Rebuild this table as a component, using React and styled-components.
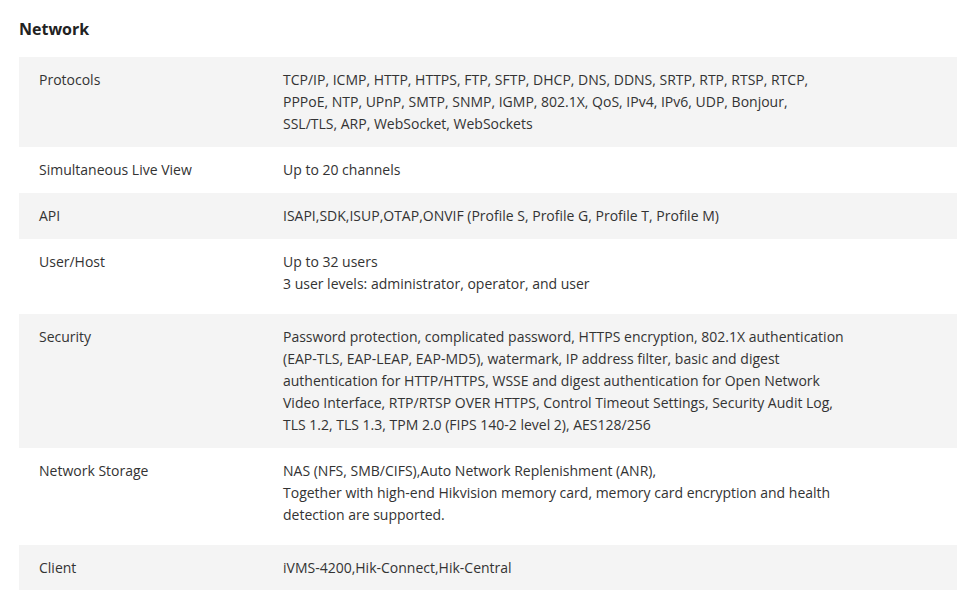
import React from 'react';
import styled, { createGlobalStyle } from 'styled-components';

const GlobalStyle = createGlobalStyle`
    body {
        margin: 0;
        background: #fff;
        font-family: "Open Sans", "Liberation Sans", sans-serif;
        color: #333;
    }
`

const specs = [
    {
        label: 'Protocols',
        lines: ['TCP/IP, ICMP, HTTP, HTTPS, FTP, SFTP, DHCP, DNS, DDNS, SRTP, RTP, RTSP, RTCP, PPPoE, NTP, UPnP, SMTP, SNMP, IGMP, 802.1X, QoS, IPv4, IPv6, UDP, Bonjour, SSL/TLS, ARP, WebSocket, WebSockets'],
    },
    { label: 'Simultaneous Live View', lines: ['Up to 20 channels'] },
    { label: 'API', lines: ['ISAPI,SDK,ISUP,OTAP,ONVIF (Profile S, Profile G, Profile T, Profile M)'] },
    {
        label: 'User/Host',
        lines: ['Up to 32 users', '3 user levels: administrator, operator, and user'],
        extra: true,
    },
    {
        label: 'Security',
        lines: ['Password protection, complicated password, HTTPS encryption, 802.1X authentication (EAP-TLS, EAP-LEAP, EAP-MD5), watermark, IP address filter, basic and digest authentication for HTTP/HTTPS, WSSE and digest authentication for Open Network Video Interface, RTP/RTSP OVER HTTPS, Control Timeout Settings, Security Audit Log, TLS 1.2, TLS 1.3, TPM 2.0 (FIPS 140-2 level 2), AES128/256'],
    },
    {
        label: 'Network Storage',
        lines: ['NAS (NFS, SMB/CIFS),Auto Network Replenishment (ANR),', 'Together with high-end Hikvision memory card, memory card encryption and health detection are supported.'],
        extra: true,
    },
    { label: 'Client', lines: ['iVMS-4200,Hik-Connect,Hik-Central'] },
];

function App() {
    return (
        <Page>
            <GlobalStyle />
            <Title>Network</Title>
            <Table>
                {specs.map((row, i) => (
                    <Row key={row.label} shaded={i % 2 === 0} extra={row.extra}>
                        <Label>{row.label}</Label>
                        <Value>
                            {row.lines.map((line) => (
                                <div key={line}>{line}</div>
                            ))}
                        </Value>
                    </Row>
                ))}
            </Table>
        </Page>
    );
}

export default App;

const Page = styled.div`
    padding: 18px 19px 0 19px;
`

const Title = styled.h2`
    margin: 0 0 17px 0;
    font-size: 16px;
    line-height: 22px;
    font-weight: 700;
    color: #222;
`

const Table = styled.div`
    display: flex;
    flex-direction: column;
    width: 938px;
`

const Row = styled.div`
    display: grid;
    grid-template-columns: 244px 1fr;
    background: ${(p) => (p.shaded ? '#f4f4f4' : '#fff')};
    padding: 12px 0 ${(p) => (p.extra ? '19px' : '12px')} 0;
    font-size: 14px;
    line-height: 22px;
`

const Label = styled.div`
    padding: 0 20px;
`

const Value = styled.div`
    padding: 0 20px;
    max-width: 561px;
`
